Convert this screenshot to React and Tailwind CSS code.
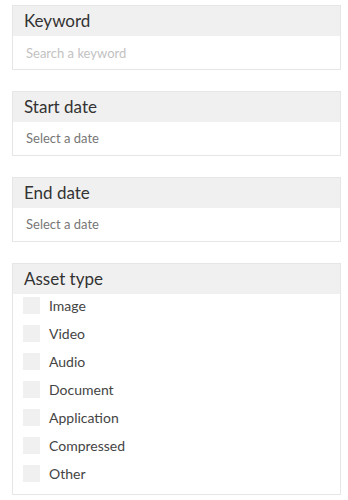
import React from "react";

const assetTypes = [
  "Image",
  "Video",
  "Audio",
  "Document",
  "Application",
  "Compressed",
  "Other",
];

const Panel = ({ title, children }) => (
  <div className="w-[329px] border border-[#e6e6e6] mb-[21px]">
    <div className="h-[30px] bg-[#f0f0f0] pl-[11px] flex items-center text-[17px] text-[#333]">
      {title}
    </div>
    {children}
  </div>
);

const App = () => {
  return (
    <div
      className="bg-white min-h-[500px] pt-[5px] pl-[12px]"
      style={{ fontFamily: "Lato, 'Open Sans', sans-serif" }}
    >
      <Panel title="Keyword">
        <input
          type="text"
          placeholder="Search a keyword"
          className="w-full h-[33px] px-[13px] text-[13px] text-[#333] placeholder:text-[#c2c2c2] outline-none"
        />
      </Panel>
      <Panel title="Start date">
        <div className="h-[33px] px-[13px] flex items-center text-[13px] text-[#777]">
          Select a date
        </div>
      </Panel>
      <Panel title="End date">
        <div className="h-[33px] px-[13px] flex items-center text-[13px] text-[#777]">
          Select a date
        </div>
      </Panel>
      <Panel title="Asset type">
        <div className="pt-[3px] pb-[1px] pl-[10px]">
          {assetTypes.map((type) => (
            <label
              key={type}
              className="flex items-center gap-[9px] h-[17px] mb-[11px] text-[14px] text-[#444]"
            >
              <span className="w-[17px] h-[17px] bg-[#f0f0f0]"></span>
              {type}
            </label>
          ))}
        </div>
      </Panel>
    </div>
  );
};

export default App;
